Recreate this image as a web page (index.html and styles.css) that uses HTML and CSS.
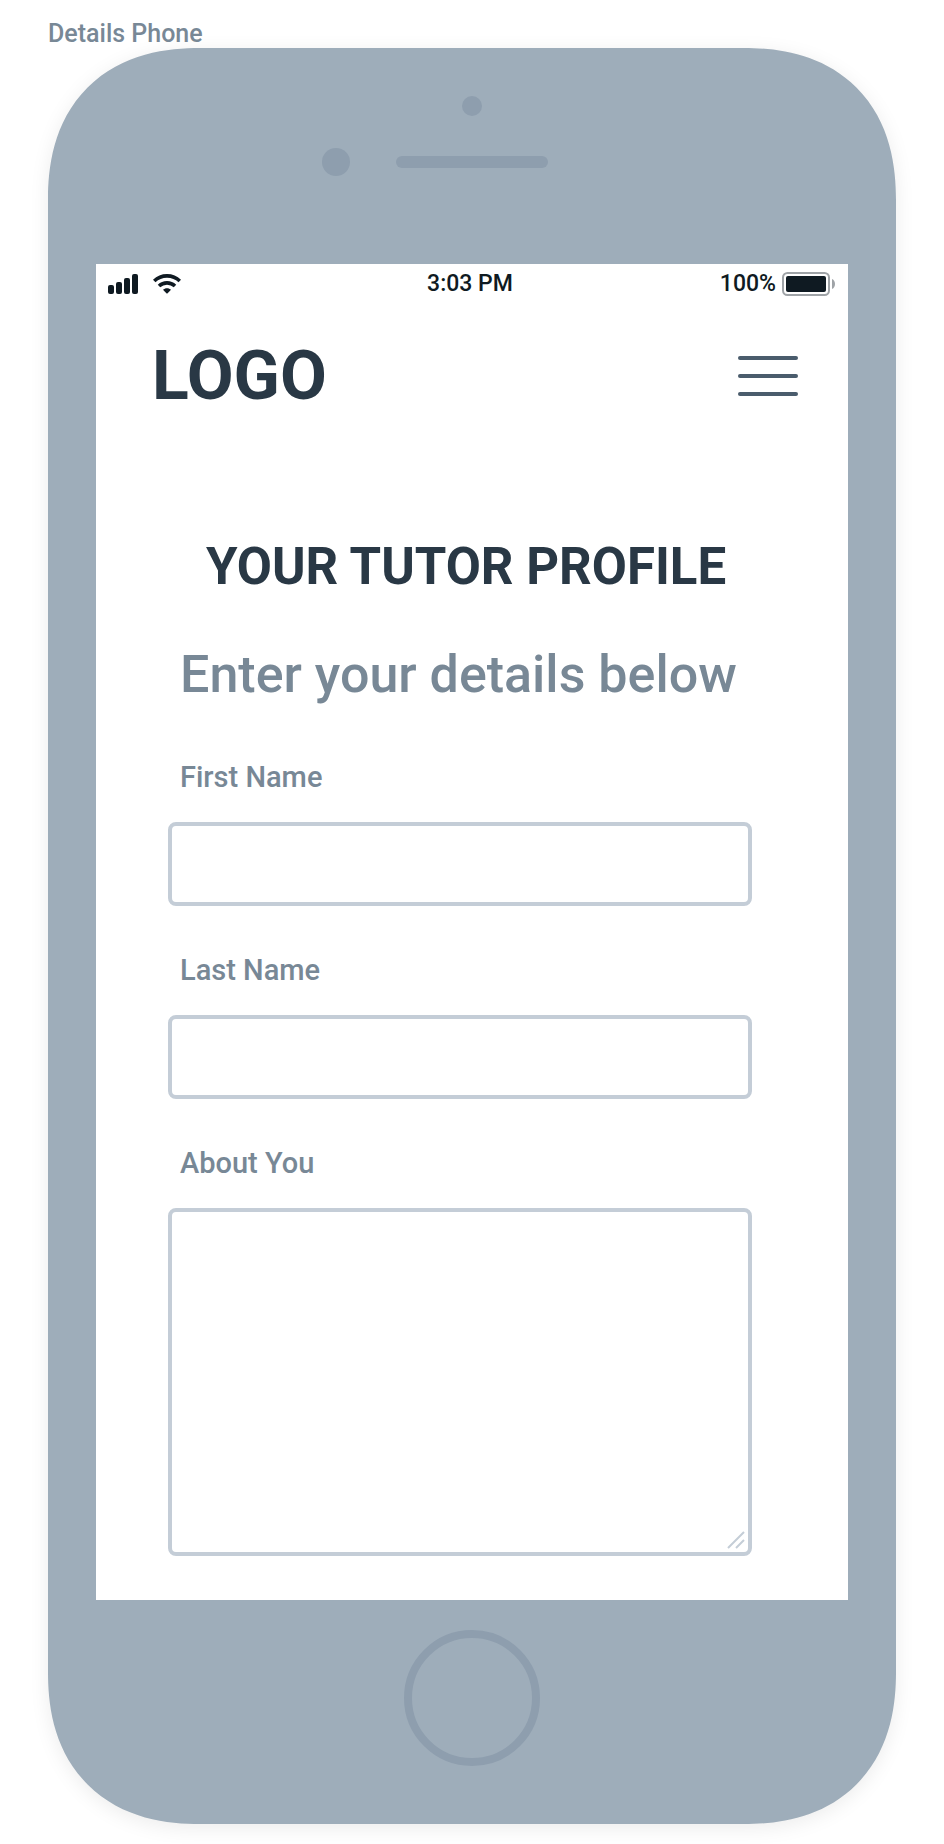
FILE: index.html
```html
<!DOCTYPE html>
<html lang="en">
<head>
<meta charset="utf-8">
<meta name="viewport" content="width=device-width, initial-scale=1">
<title>Details Phone</title>
<link rel="stylesheet" href="styles.css">
</head>
<body>
<div class="artboard">
  <div class="artboard-name">Details Phone</div>
  <div class="phone">
    <div class="bezel-top">
      <span class="sensor"></span>
      <div class="speaker-row">
        <span class="camera"></span>
        <span class="speaker"></span>
      </div>
    </div>
    <div class="screen">
      <div class="status-bar">
        <div class="status-left">
          <svg width="30" height="20" viewBox="0 0 30 20" fill="#0f1a22" aria-hidden="true">
            <rect x="0" y="11" width="6" height="9" rx="2"/>
            <rect x="8" y="8" width="6" height="12" rx="2"/>
            <rect x="16" y="4" width="6" height="16" rx="2"/>
            <rect x="24" y="0" width="6" height="20" rx="2"/>
          </svg>
          <svg width="28" height="20" viewBox="0 0 28 20" fill="none" stroke="#0f1a22" stroke-width="3.6" aria-hidden="true">
            <path d="M1.2 7C8.2 .2 19.800 .2 26.800 7"/>
            <path d="M6 12C10.500 7.800 17.500 7.800 22 12"/>
            <path d="M10 15.800C12 13.600 16 13.600 18 15.800L14.600 19.200Q14 19.800 13.400 19.200Z" fill="#0f1a22" stroke="none"/>
          </svg>
        </div>
        <div class="status-time">3:03 PM</div>
        <div class="status-right">
          <span>100%</span>
          <svg width="54" height="24" viewBox="0 0 54 24" aria-hidden="true">
            <rect x="1" y="1" width="46" height="22" rx="4.500" fill="none" stroke="#9fa3a7" stroke-width="2"/>
            <rect x="4" y="4" width="40" height="16" rx="2" fill="#0f1a22"/>
            <path d="M50 7C54 8.500 54 15.500 50 17Z" fill="#9fa3a7"/>
          </svg>
        </div>
      </div>
      <header class="header">
        <div class="logo">LOGO</div>
        <button class="menu" type="button" aria-label="Menu">
          <span class="menu-line"></span>
          <span class="menu-line"></span>
          <span class="menu-line"></span>
        </button>
      </header>
      <main class="content">
        <h1 class="title">YOUR TUTOR PROFILE</h1>
        <p class="subtitle">Enter your details below</p>
        <form class="form">
          <div class="field">
            <label class="label" for="first-name">First Name</label>
            <input class="control" id="first-name" type="text">
          </div>
          <div class="field">
            <label class="label" for="last-name">Last Name</label>
            <input class="control" id="last-name" type="text">
          </div>
          <div class="field field-about">
            <label class="label" for="about">About You</label>
            <textarea class="control control-area" id="about"></textarea>
            <svg class="grip" width="18" height="18" viewBox="0 0 18 18" fill="none" stroke="#c4cdd7" stroke-width="2" aria-hidden="true">
              <path d="M1 17L17 1M9 17L17 9"/>
            </svg>
          </div>
        </form>
      </main>
    </div>
    <div class="bezel-bottom">
      <button class="home" type="button" aria-label="Home"></button>
    </div>
  </div>
</div>
</body>
</html>
```

FILE: styles.css
```css
* {
  box-sizing: border-box;
}

body {
  margin: 0;
  background: #fff;
  color: #293845;
  font-family: Roboto, "Liberation Sans", sans-serif;
}

.artboard {
  padding: 0 48px 20px;
}

.artboard-name {
  padding-top: 18px;
  height: 48px;
  color: #788896;
  font-size: 25px;
  line-height: 32px;
  font-weight: 500;
}

.phone {
  padding: 0 48px;
  border-radius: 136px;
  background: #9eadba;
  box-shadow: 0 4px 20px rgba(0, 0, 0, 0.08);
}

@supports (corner-shape: superellipse(1.2)) {
  .phone {
    border-radius: 152px;
    corner-shape: superellipse(1.2);
  }
}

.bezel-top {
  display: flex;
  flex-direction: column;
  align-items: center;
  gap: 32px;
  height: 216px;
  padding-top: 48px;
}

.sensor {
  width: 20px;
  height: 20px;
  border-radius: 50%;
  background: #8e9eae;
}

.speaker-row {
  display: flex;
  align-items: center;
  gap: 46px;
  padding-right: 74px;
}

.camera {
  width: 28px;
  height: 28px;
  border-radius: 50%;
  background: #8e9eae;
}

.speaker {
  width: 152px;
  height: 12px;
  border-radius: 6px;
  background: #8e9eae;
}

.screen {
  background: #fff;
}

.status-bar {
  display: grid;
  grid-template-columns: 1fr auto 1fr;
  align-items: center;
  height: 40px;
  padding: 0 12px;
  color: #0f1a22;
  font-size: 23px;
  line-height: 28px;
  font-weight: 500;
}

.status-left,
.status-right {
  display: flex;
  align-items: center;
}

.status-left {
  gap: 15px;
}

.status-time {
  padding-right: 4px;
}

.status-right {
  justify-content: flex-end;
  gap: 6px;
}

.header {
  display: flex;
  align-items: center;
  justify-content: space-between;
  height: 144px;
  padding: 0 50px 0 56px;
}

.logo {
  font-size: 68px;
  line-height: 80px;
  font-weight: 700;
}

.menu {
  display: flex;
  flex-direction: column;
  gap: 14px;
  width: 60px;
  padding: 0;
  border: 0;
  background: none;
}

.menu-line {
  height: 4px;
  border-radius: 2px;
  background: #4a5c6c;
}

.content {
  padding: 87px 96px 44px 72px;
}

.title {
  margin: 0 0 44px;
  padding-left: 12px;
  font-size: 51px;
  line-height: 64px;
  font-weight: 700;
  text-align: center;
  white-space: nowrap;
}

.subtitle {
  margin: 0 0 54px;
  padding-left: 12px;
  color: #788896;
  font-size: 52px;
  line-height: 64px;
  font-weight: 500;
  white-space: nowrap;
}

.form {
  display: flex;
  flex-direction: column;
  gap: 48px;
}

.field {
  display: flex;
  flex-direction: column;
  gap: 29px;
}

.field-about {
  position: relative;
}

.label {
  padding-left: 12px;
  color: #788896;
  font-size: 29px;
  line-height: 32px;
  font-weight: 500;
}

.control {
  display: block;
  width: 100%;
  height: 84px;
  padding: 0 16px;
  border: 4px solid #c4cdd7;
  border-radius: 8px;
  background: #fff;
  color: #293845;
  font: inherit;
  font-size: 28px;
}

.control-area {
  height: 348px;
  padding: 16px;
  resize: none;
}

.grip {
  position: absolute;
  right: 7px;
  bottom: 7px;
}

.bezel-bottom {
  display: flex;
  justify-content: center;
  height: 224px;
  padding-top: 30px;
}

.home {
  width: 136px;
  height: 136px;
  padding: 0;
  border: 8px solid #8e9eae;
  border-radius: 50%;
  background: none;
}
```
